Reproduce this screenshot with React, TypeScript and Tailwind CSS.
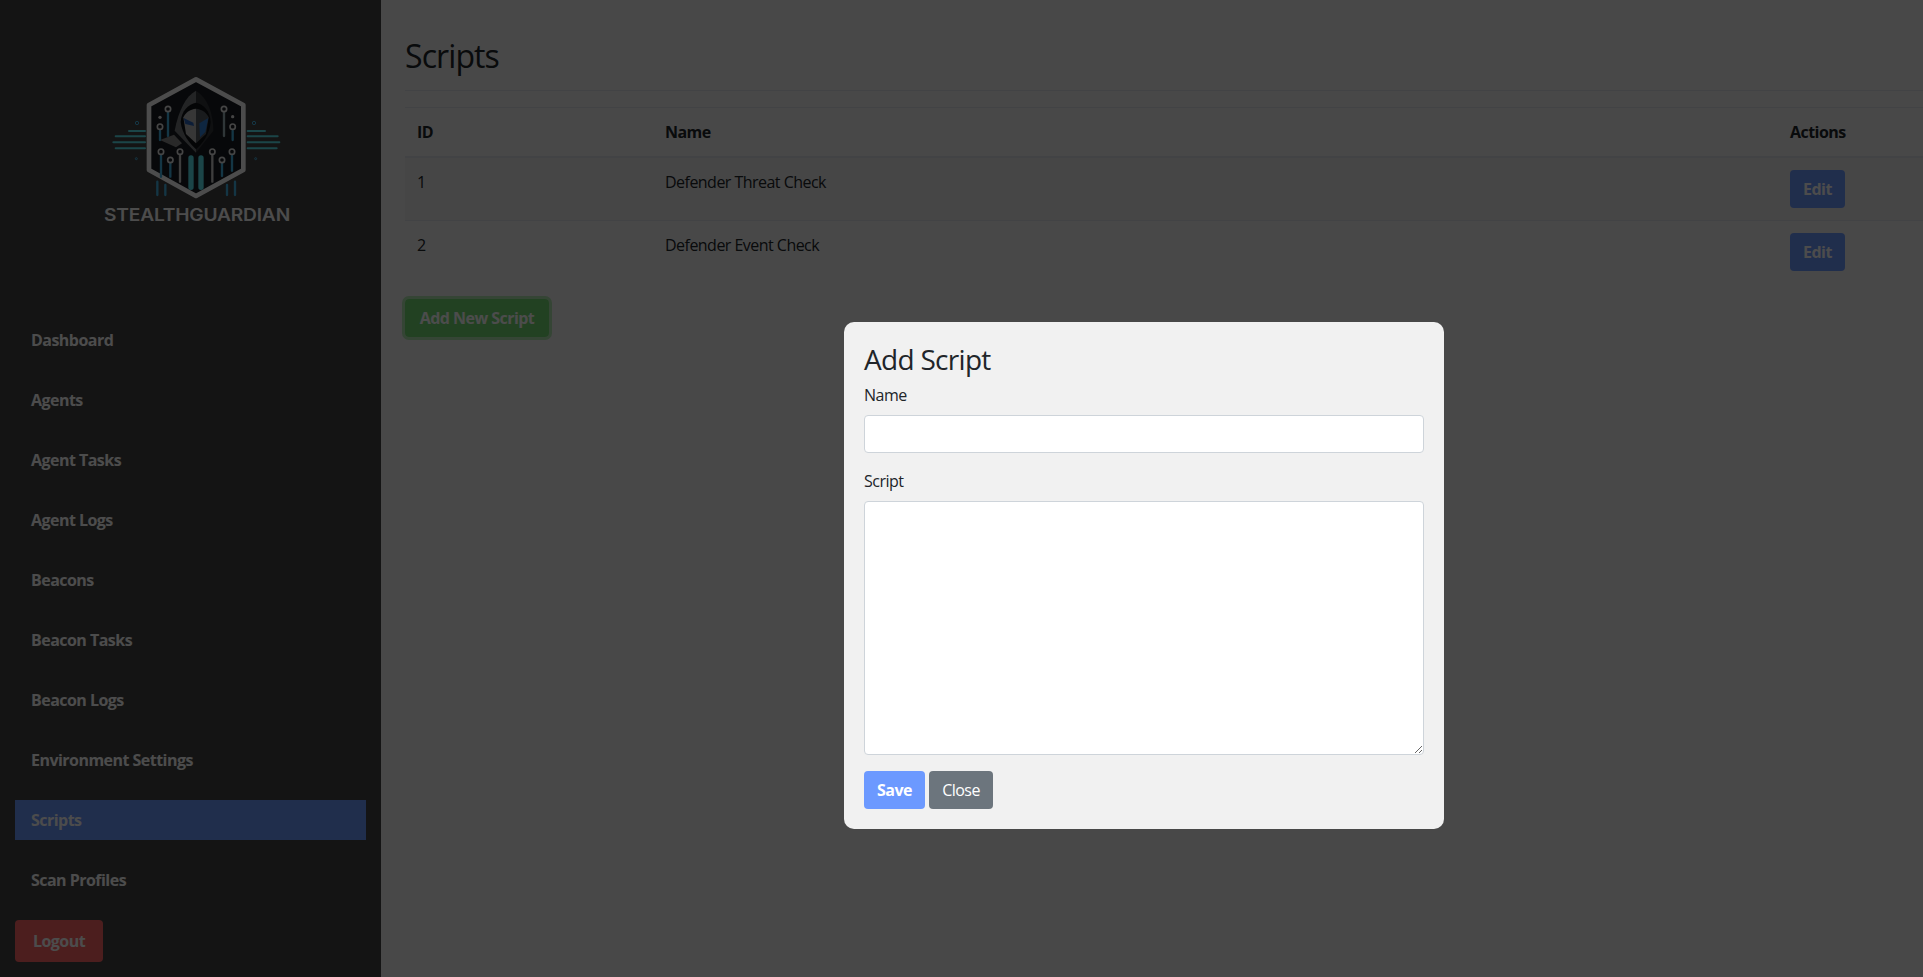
const NAV_ITEMS = [
  'Dashboard',
  'Agents',
  'Agent Tasks',
  'Agent Logs',
  'Beacons',
  'Beacon Tasks',
  'Beacon Logs',
  'Environment Settings',
  'Scripts',
  'Scan Profiles',
];

const SCRIPTS = [
  { id: 1, name: 'Defender Threat Check' },
  { id: 2, name: 'Defender Event Check' },
];

const FONT = "font-['Open_Sans',sans-serif] tracking-[-0.53px]";

function Logo() {
  const blue = '#45b4e6';
  const teal = '#5ce6f2';
  const grey = '#ffffff';
  return (
    <svg viewBox="0 0 720 540" width={240} height={180} className="block ml-[80px] mt-[60px] shrink-0">
      {/* side traces */}
      <g stroke={teal} strokeWidth="6" strokeLinecap="round">
        <path d="M147 213H195M107 229H195M100 247H195M107 265H195" />
        <path d="M503 213H555M503 229H593M503 247H598M503 265H590" />
      </g>
      <g fill="none" stroke={blue} strokeWidth="3">
        <circle cx="171" cy="189" r="5" />
        <circle cx="522" cy="189" r="5" />
        <circle cx="169" cy="296" r="3" />
        <circle cx="527" cy="296" r="3" />
      </g>
      {/* bottom stubs */}
      <path d="M232 365V405M256 375V405M441 375V405M465 365V405" stroke={blue} strokeWidth="7" strokeLinecap="round" />
      {/* hexagon */}
      <path d="M348 58L490 135V330L348 408L207 330V135Z" fill="#1a1d22" stroke={grey} strokeWidth="14" strokeLinejoin="round" />
      {/* circuit lines */}
      <g strokeWidth="7" strokeLinecap="round">
        <path d="M264 157V228M240 212V240M243 285V350M271 310V350M426 310V348M456 285V332M458 212V240" stroke={blue} />
        <path d="M432 157V228" stroke="#9fb4bd" />
        <path d="M300 285V365M397 285V365" stroke="#d0d0d0" />
      </g>
      <path d="M333 294V382M363 294V382" stroke={teal} strokeWidth="16" strokeLinecap="round" />
      <g fill="none" stroke="#e6e6e6" strokeWidth="5">
        <circle cx="264" cy="147" r="8" />
        <circle cx="240" cy="200" r="8" />
        <circle cx="243" cy="275" r="8" />
        <circle cx="300" cy="275" r="8" />
        <circle cx="271" cy="300" r="8" />
        <circle cx="432" cy="147" r="8" />
        <circle cx="458" cy="200" r="8" />
        <circle cx="397" cy="275" r="8" />
        <circle cx="456" cy="275" r="8" />
        <circle cx="426" cy="300" r="8" />
      </g>
      <circle cx="240" cy="172" r="5" fill="#e6e6e6" />
      <circle cx="458" cy="170" r="5" fill="#e6e6e6" />
      {/* hood */}
      <path d="M288 262L240 240L282 224L306 250Z" fill="#8a8a8a" />
      <path d="M348 92C318 108 296 150 284 212L348 278Z" fill="#777a7e" />
      <path d="M348 92C382 112 400 160 400 212L348 278Z" fill="#33363b" />
      <path d="M348 128C326 132 304 152 302 186C306 222 330 252 348 268C366 252 390 222 392 186C390 152 370 132 348 128Z" fill="#0f1114" />
      {/* mask */}
      <path d="M348 146C330 148 316 158 310 172L318 222L348 250Z" fill="#b8b8b8" />
      <path d="M348 146C366 148 380 158 386 172L378 222L348 250Z" fill="#565b62" />
      <path d="M311 174L340 188L342 198L316 192Z" fill="#2a62b8" />
      <path d="M385 174L358 190L360 232L376 216Z" fill="#2f7fd8" />
      <text
        x="72"
        y="482"
        textLength="558"
        lengthAdjust="spacingAndGlyphs"
        fontFamily="Inter, sans-serif"
        fontWeight="600"
        fontSize="51"
        fill="#ffffff"
      >
        STEALTHGUARDIAN
      </text>
    </svg>
  );
}

function Sidebar() {
  return (
    <aside className="w-[381px] h-[977px] shrink-0 bg-[#444444] flex flex-col">
      <Logo />
      <nav className="flex flex-col gap-5 mt-[80px] px-[15px]">
        {NAV_ITEMS.map((item) => (
          <a
            key={item}
            className={`h-10 px-4 flex items-center text-base font-bold text-white ${item === 'Scripts' ? 'bg-[#6c99ff]' : ''}`}
          >
            {item}
          </a>
        ))}
      </nav>
      <button className="ml-[15px] mt-5 w-[88px] h-[42px] rounded bg-[#ff6666] text-white text-base font-bold">
        Logout
      </button>
    </aside>
  );
}

function ScriptsTable() {
  return (
    <table className="w-full table-fixed border-collapse text-base text-[#212529]">
      <colgroup>
        <col className="w-[248px]" />
        <col />
        <col className="w-[145px]" />
      </colgroup>
      <thead>
        <tr className="border-t border-b-2 border-[#dee2e6] h-[49px]">
          <th className="px-3 text-left font-bold">ID</th>
          <th className="px-3 text-left font-bold">Name</th>
          <th className="px-3 text-left font-bold">Actions</th>
        </tr>
      </thead>
      <tbody>
        {SCRIPTS.map((script, i) => (
          <tr key={script.id} className={`border-b border-[#dee2e6] ${i === 0 ? 'bg-[#e9e9e9]' : 'border-b-0'}`}>
            <td className="px-3 py-3 align-top">{script.id}</td>
            <td className="px-3 py-3 align-top">{script.name}</td>
            <td className="px-3 py-3 align-top">
              <button className="block w-[55px] h-[38px] rounded bg-[#6c99ff] text-white font-bold">Edit</button>
            </td>
          </tr>
        ))}
      </tbody>
    </table>
  );
}

function AddScriptModal() {
  return (
    <div className="fixed inset-0 bg-black/70 pl-[844px] pt-[322px]">
      <div className="w-[600px] rounded-[10px] bg-[#f1f1f1] p-5 text-[#212529]">
        <h4 className="text-[28px] tracking-[-0.7px] pt-[2px] leading-[31.6px] mb-[7px]">Add Script</h4>
        <label className="block text-base leading-6 mb-2">Name</label>
        <input className="block w-full h-[38px] mb-4 bg-white border border-[#ced4da] rounded" />
        <label className="block text-base leading-6 mb-2">Script</label>
        <textarea className="block w-full h-[254px] mb-4 bg-white border border-[#ced4da] rounded" />
        <div className="flex gap-1">
          <button className="w-[61px] h-[38px] rounded bg-[#6c99ff] text-white font-bold">Save</button>
          <button className="w-[64px] h-[38px] rounded bg-[#6c757d] text-white">Close</button>
        </div>
      </div>
    </div>
  );
}

export default function App() {
  return (
    <div className={`flex h-[977px] overflow-hidden bg-[#f1f1f1] ${FONT}`}>
      <Sidebar />
      <main className="flex-1 min-w-0 pl-6 text-[#212529]">
        <h2 className="text-[32px] tracking-[-0.9px] leading-[38.4px] pt-[37px] pb-[15px] border-b border-[#dee2e6]">Scripts</h2>
        <div className="mt-4">
          <ScriptsTable />
        </div>
        <button className="mt-4 w-[144px] h-[38px] rounded bg-[#72db72] text-white font-bold outline-[3px] outline-[#72db72]/50">
          Add New Script
        </button>
      </main>
      <AddScriptModal />
    </div>
  );
}
